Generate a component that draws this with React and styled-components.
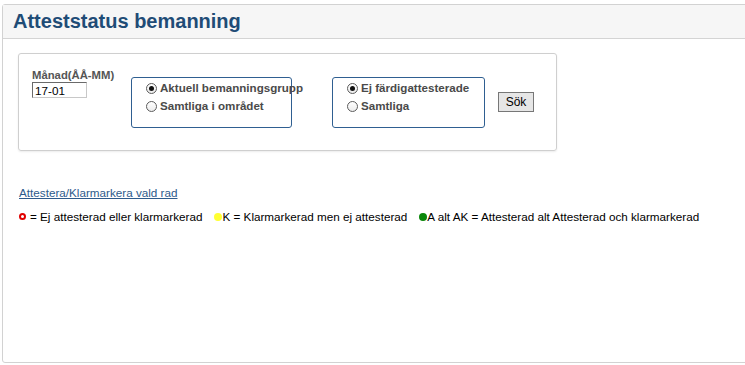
import React, { useState } from 'react';
import styled, { createGlobalStyle } from 'styled-components';

const GlobalStyle = createGlobalStyle`
  html, body {
    margin: 0;
    padding: 0;
    background: #fff;
    overflow: hidden;
  }
  body {
    font-family: "Liberation Sans", Arial, sans-serif;
    font-size: 11.7px;
    color: #000;
  }
`;

const Page = styled.div`
  padding: 4px 0 0 2px;
`;

const Panel = styled.section`
  width: 770px;
  height: 359px;
  border: 1px solid #d2d2d2;
  border-radius: 3px;
  box-sizing: border-box;
  background: #fff;
`;

const Header = styled.header`
  height: 33px;
  background: #f6f6f6;
  border-bottom: 1px solid #d4d4d4;
  display: flex;
  align-items: center;
  padding-left: 10px;
`;

const Title = styled.h1`
  margin: 0;
  font-size: 20px;
  font-weight: bold;
  color: #1f4c76;
`;

const Body = styled.div`
  padding: 14px 0 0 15px;
`;

const FormBox = styled.div`
  width: 539px;
  height: 98px;
  box-sizing: border-box;
  border: 1px solid #cfcfcf;
  border-radius: 3px;
  box-shadow: 0 1px 2px rgba(0, 0, 0, 0.08);
  display: flex;
  align-items: flex-start;
  padding: 15px 0 0 13px;
`;

const Field = styled.div`
  display: flex;
  flex-direction: column;
  width: 99px;
  flex-shrink: 0;
`;

const Label = styled.label`
  font-weight: bold;
  color: #555;
  font-size: 11.3px;
  line-height: 13px;
  white-space: nowrap;
`;

const MonthInput = styled.input`
  width: 55px;
  height: 16px;
  box-sizing: border-box;
  margin: 0;
  padding: 1px 2px;
  font-family: "Liberation Sans", Arial, sans-serif;
  font-size: 11.7px;
  border: 1px solid #c8c8c8;
  border-top-color: #6a6a6a;
  border-left-color: #6a6a6a;
  outline: none;
`;

const Group = styled.fieldset`
  margin: 8px 0 0 0;
  min-width: 0;
  width: ${(p) => p.$width}px;
  flex-shrink: 0;
  height: 51px;
  box-sizing: border-box;
  border: 1px solid #2f5f91;
  border-radius: 3px;
  padding: 3px 0 0 14px;
  display: flex;
  flex-direction: column;
  gap: 4px;
  & + & {
    margin-left: 40px;
  }
`;

const Option = styled.label`
  display: flex;
  align-items: center;
  gap: 3px;
  font-weight: bold;
  color: #4a4a4a;
  font-size: 11.6px;
  line-height: 14px;
  white-space: nowrap;
  cursor: pointer;
`;

const RadioMark = styled.span`
  width: 11px;
  height: 11px;
  flex-shrink: 0;
  box-sizing: border-box;
  border-radius: 50%;
  border: 1px solid #5c5c5c;
  background: linear-gradient(#fff, #ececec);
  display: inline-flex;
  align-items: center;
  justify-content: center;
  &::after {
    content: '';
    width: 5px;
    height: 5px;
    border-radius: 50%;
    background: ${(p) => (p.$checked ? '#111' : 'transparent')};
  }
`;

const SearchButton = styled.button`
  margin: 23px 0 0 13px;
  width: 36px;
  height: 20px;
  padding: 0;
  font-family: "Liberation Sans", Arial, sans-serif;
  font-size: 12px;
  color: #000;
  background: #e6e6e6;
  border: 1px solid #777;
  border-radius: 0;
`;

const ActionLink = styled.a`
  display: inline-block;
  margin-top: 35px;
  margin-left: 1px;
  color: #2d5b8c;
  text-decoration: underline;
`;

const Legend = styled.div`
  display: flex;
  align-items: center;
  margin-top: 11px;
  margin-left: 1px;
  gap: 12px;
`;

const LegendItem = styled.span`
  display: inline-flex;
  align-items: center;
`;

const Dot = styled.span`
  width: ${(p) => (p.$ring ? 7 : 8)}px;
  height: ${(p) => (p.$ring ? 7 : 8)}px;
  box-sizing: border-box;
  border-radius: 50%;
  margin-right: ${(p) => (p.$ring ? '4px' : '0')};
  background: ${(p) => (p.$ring ? '#fff' : p.$color)};
  border: ${(p) => (p.$ring ? `2px solid ${p.$color}` : 'none')};
`;

function RadioGroup({ width, options, value, onChange }) {
  return (
    <Group $width={width}>
      {options.map((o) => (
        <Option key={o} onClick={() => onChange(o)}>
          <RadioMark $checked={value === o} />
          {o}
        </Option>
      ))}
    </Group>
  );
}

export default function App() {
  const [scope, setScope] = useState('Aktuell bemanningsgrupp');
  const [status, setStatus] = useState('Ej färdigattesterade');

  return (
    <Page>
      <GlobalStyle />
      <Panel>
        <Header>
          <Title>Atteststatus bemanning</Title>
        </Header>
        <Body>
          <FormBox>
            <Field>
              <Label>Månad(ÅÅ-MM)</Label>
              <MonthInput defaultValue="17-01" />
            </Field>
            <RadioGroup
              width={161}
              options={['Aktuell bemanningsgrupp', 'Samtliga i området']}
              value={scope}
              onChange={setScope}
            />
            <RadioGroup
              width={153}
              options={['Ej färdigattesterade', 'Samtliga']}
              value={status}
              onChange={setStatus}
            />
            <SearchButton>Sök</SearchButton>
          </FormBox>
          <ActionLink href="#">Attestera/Klarmarkera vald rad</ActionLink>
          <Legend>
            <LegendItem>
              <Dot $ring $color="#e00000" />= Ej attesterad eller klarmarkerad
            </LegendItem>
            <LegendItem>
              <Dot $color="#ffff33" />K = Klarmarkerad men ej attesterad
            </LegendItem>
            <LegendItem>
              <Dot $color="#0a870a" />A alt AK = Attesterad alt Attesterad och klarmarkerad
            </LegendItem>
          </Legend>
        </Body>
      </Panel>
    </Page>
  );
}
